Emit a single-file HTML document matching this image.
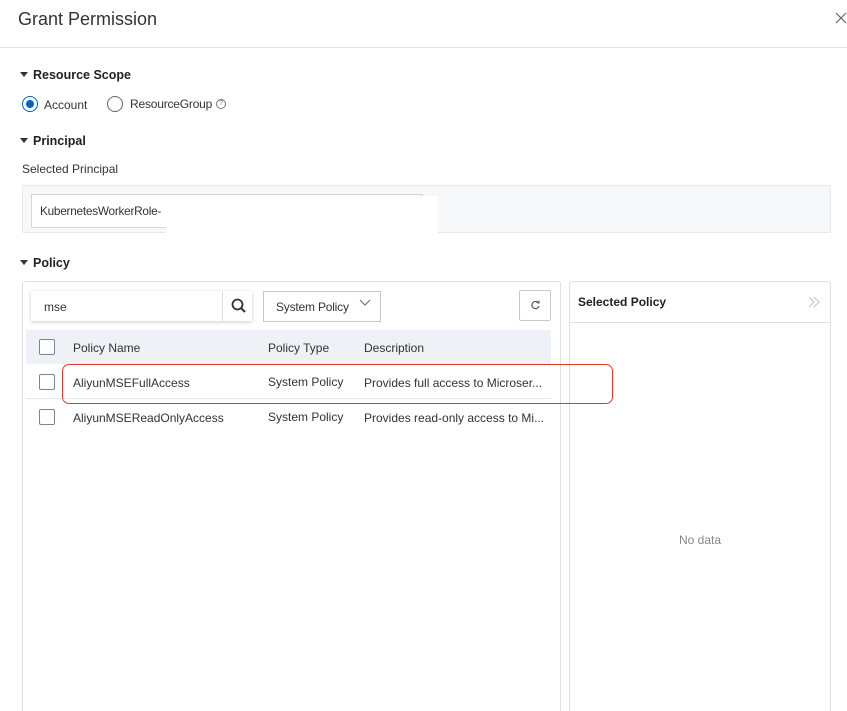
<!DOCTYPE html>
<html style="width:847px;height:711px;overflow:hidden"><head><style>
*{box-sizing:border-box;margin:0;padding:0}
body{width:847px;height:711px;overflow:hidden;background:#fff;font-family:"Liberation Sans",sans-serif;color:#333;position:relative;font-size:12px}
.a{position:absolute}
.sec{font-weight:bold;font-size:12.5px;color:#222}
.tri{display:inline-block;width:0;height:0;border-left:4px solid transparent;border-right:4px solid transparent;border-top:5px solid #333;margin-right:5px;vertical-align:2px}
.cb{position:absolute;width:16px;height:16px;border:1px solid #7a8599;border-radius:2px;background:#fff}
</style></head><body>
<div class="a" style="left:18px;top:9px;font-size:18px;color:#333">Grant Permission</div>
<svg class="a" style="left:835px;top:12px" width="12" height="12"><path d="M1 1L11 11M11 1L1 11" stroke="#666" stroke-width="1.2"/></svg>
<div class="a" style="left:0;top:47px;width:847px;height:1px;background:#e3e3e3"></div>

<div class="a sec" style="left:20px;top:68px"><span class="tri"></span>Resource Scope</div>
<div class="a" style="left:22px;top:96px;width:16px;height:16px;border:1px solid #0064c8;border-radius:50%"><div style="margin:3px;width:8px;height:8px;border-radius:50%;background:#0064c8"></div></div>
<div class="a" style="left:44px;top:98px">Account</div>
<div class="a" style="left:107px;top:96px;width:16px;height:16px;border:1px solid #666;border-radius:50%"></div>
<div class="a" style="left:130px;top:97px;letter-spacing:-0.2px">ResourceGroup</div>
<div class="a" style="left:216px;top:99px;width:10px;height:10px;border:1px solid #777;border-radius:50%;font-size:7px;line-height:8px;text-align:center;color:#777">?</div>

<div class="a sec" style="left:20px;top:134px"><span class="tri"></span>Principal</div>
<div class="a" style="left:22px;top:162px">Selected Principal</div>
<div class="a" style="left:22px;top:185px;width:809px;height:48px;background:#f6f8fa;border:1px solid #e6e9ed;border-radius:2px"></div>
<div class="a" style="left:31px;top:194px;width:392px;height:34px;background:#fff;border:1px solid #d4d7dc"></div>
<div class="a" style="left:40px;top:204px;font-size:11.8px;letter-spacing:-0.25px">KubernetesWorkerRole-</div>
<div class="a" style="left:166px;top:196px;width:272px;height:39px;background:#fff"></div>

<div class="a sec" style="left:20px;top:256px"><span class="tri"></span>Policy</div>
<div class="a" style="left:22px;top:281px;width:539px;height:430px;border:1px solid #e0e0e0;border-bottom:none;border-radius:3px 3px 0 0"></div>
<div class="a" style="left:569px;top:281px;width:262px;height:430px;border:1px solid #e0e0e0;border-bottom:none;border-radius:3px 3px 0 0"></div>
<div class="a" style="left:569px;top:322px;width:262px;height:1px;background:#e0e0e0"></div>
<div class="a sec" style="left:578px;top:295px;font-size:12px">Selected Policy</div>
<svg class="a" style="left:808px;top:296px" width="12" height="12"><path d="M1 1L6 6L1 11M6 1L11 6L6 11" stroke="#c8c8c8" fill="none" stroke-width="1.2"/></svg>
<div class="a" style="left:679px;top:533px;color:#888">No data</div>

<div class="a" style="left:31px;top:291px;width:221px;height:30px;background:#fff;box-shadow:0 1px 4px rgba(0,0,0,.2)"></div>
<div class="a" style="left:222px;top:291px;width:1px;height:30px;background:#e0e0e0"></div>
<div class="a" style="left:44px;top:300px">mse</div>
<svg class="a" style="left:231px;top:298px" width="16" height="16"><circle cx="6.5" cy="6.5" r="5" stroke="#333" stroke-width="1.8" fill="none"/><path d="M10 10L14 14" stroke="#333" stroke-width="2"/></svg>
<div class="a" style="left:263px;top:291px;width:118px;height:31px;border:1px solid #c8c8c8"></div>
<div class="a" style="left:276px;top:300px;letter-spacing:-0.2px">System Policy</div>
<svg class="a" style="left:359px;top:299px" width="12" height="8"><path d="M1 1L6 6L11 1" stroke="#666" fill="none"/></svg>
<div class="a" style="left:519px;top:290px;width:32px;height:31px;border:1px solid #c8c8c8;border-radius:2px"></div>
<svg class="a" style="left:530px;top:300px" width="11" height="11"><path d="M8.5 3A3.6 3.6 0 1 0 9 6" stroke="#555" fill="none" stroke-width="1.1"/><path d="M6.5 2.5L9 3L9 0.5" stroke="#555" fill="none"/></svg>

<div class="a" style="left:26px;top:330px;width:525px;height:34px;background:#eef1f6"></div>
<div class="cb" style="left:39px;top:339px"></div>
<div class="a" style="left:73px;top:341px">Policy Name</div>
<div class="a" style="left:268px;top:341px">Policy Type</div>
<div class="a" style="left:364px;top:341px">Description</div>
<div class="a" style="left:26px;top:398px;width:525px;height:1px;background:#e6e6e6"></div>
<div class="cb" style="left:39px;top:374px"></div>
<div class="a" style="left:73px;top:376px">AliyunMSEFullAccess</div>
<div class="a" style="left:268px;top:375px">System Policy</div>
<div class="a" style="left:364px;top:376px">Provides full access to Microser...</div>
<div class="cb" style="left:39px;top:409px"></div>
<div class="a" style="left:73px;top:411px">AliyunMSEReadOnlyAccess</div>
<div class="a" style="left:268px;top:410px">System Policy</div>
<div class="a" style="left:364px;top:411px">Provides read-only access to Mi...</div>

<div class="a" style="left:62px;top:364px;width:551px;height:40px;border:1.5px solid #e03a2a;border-radius:7px"></div>
</body></html>
